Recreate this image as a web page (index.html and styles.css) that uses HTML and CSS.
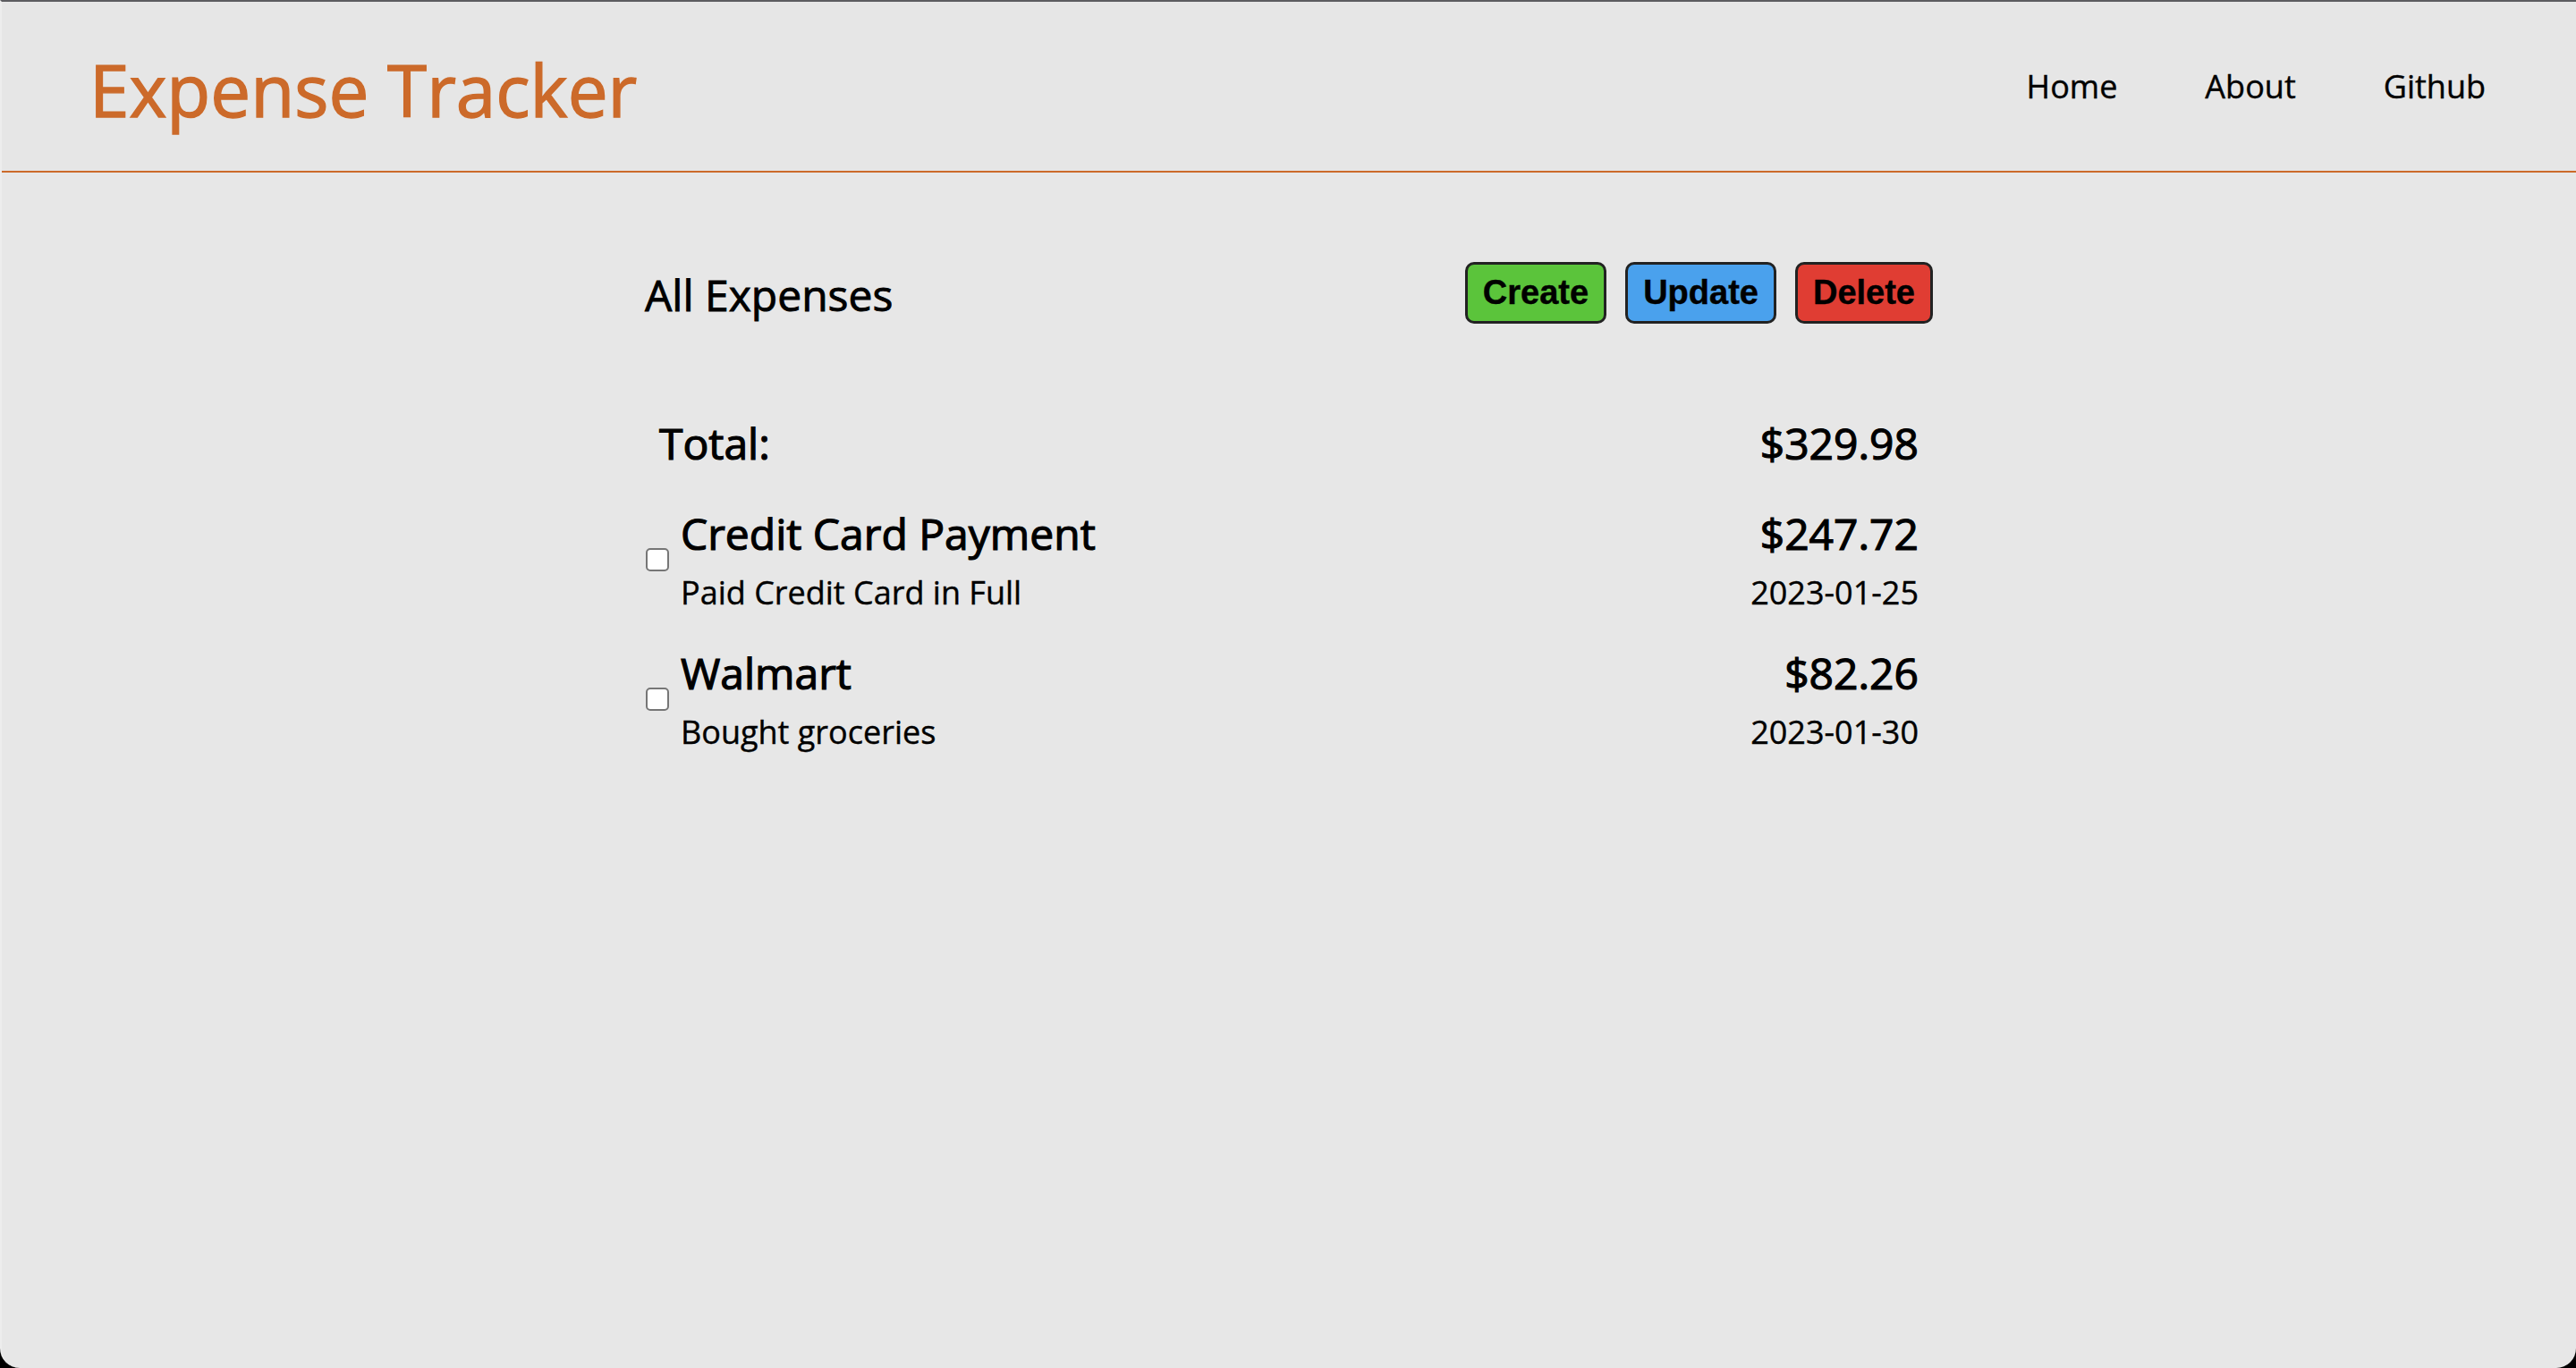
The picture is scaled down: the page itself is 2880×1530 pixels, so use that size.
FILE: index.html
```html
<!DOCTYPE html>
<html lang="en">
<head>
<meta charset="utf-8">
<title>Expense Tracker</title>
<link rel="stylesheet" href="styles.css">
</head>
<body>
<div class="window">
  <header class="site-header">
    <h1 class="brand">Expense Tracker</h1>
    <nav class="nav">
      <a href="#" class="nav-link">Home</a>
      <a href="#" class="nav-link">About</a>
      <a href="#" class="nav-link">Github</a>
    </nav>
  </header>
  <main class="content">
    <div class="toolbar">
      <h2 class="page-title">All Expenses</h2>
      <div class="actions">
        <button class="btn btn-create">Create</button>
        <button class="btn btn-update">Update</button>
        <button class="btn btn-delete">Delete</button>
      </div>
    </div>
    <div class="total-row">
      <span class="total-label">Total:</span>
      <span class="total-amount">$329.98</span>
    </div>
    <ul class="expense-list">
      <li class="expense">
        <input type="checkbox" class="check">
        <div class="expense-main">
          <div class="expense-name">Credit Card Payment</div>
          <div class="expense-desc">Paid Credit Card in Full</div>
        </div>
        <div class="expense-side">
          <div class="expense-amount">$247.72</div>
          <div class="expense-date">2023-01-25</div>
        </div>
      </li>
      <li class="expense">
        <input type="checkbox" class="check">
        <div class="expense-main">
          <div class="expense-name">Walmart</div>
          <div class="expense-desc">Bought groceries</div>
        </div>
        <div class="expense-side">
          <div class="expense-amount">$82.26</div>
          <div class="expense-date">2023-01-30</div>
        </div>
      </li>
    </ul>
  </main>
</div>
</body>
</html>
```
FILE: styles.css
```css
html, body {
  margin: 0;
  padding: 0;
  height: 100%;
  background: #000;
}
body {
  font-family: "Open Sans", "Noto Sans", sans-serif;
  color: #000;
}
.window {
  box-sizing: border-box;
  height: 1530px;
  background: #e7e7e7;
  border-top: 2px solid #5c5c60;
  border-left: 2px solid #ededed;
  border-radius: 0 0 22px 22px;
  overflow: hidden;
}
.site-header {
  display: flex;
  align-items: center;
  justify-content: space-between;
  height: 189px;
  padding: 0 101px 0 98px;
  border-bottom: 2px solid #cc6a2a;
  background: #e6e6e6;
}
.brand {
  margin: 0;
  font-size: 80px;
  font-weight: 400;
  color: #cc6a2a;
  -webkit-text-stroke: 1.4px #cc6a2a;
  line-height: 1;
  padding-top: 6px;
}
.nav {
  display: flex;
  gap: 98px;
}
.nav-link {
  font-size: 36px;
  font-weight: 400;
  -webkit-text-stroke: 0.4px #000;
  color: #000;
  text-decoration: none;
}
.content {
  width: 1440px;
  margin: 0 auto;
  padding-top: 100px;
}
.toolbar {
  display: flex;
  align-items: center;
  justify-content: space-between;
}
.page-title {
  margin: 0;
  font-size: 48px;
  font-weight: 400;
  -webkit-text-stroke: 0.9px #000;
  padding-top: 4px;
}
.actions {
  display: flex;
  gap: 21px;
}
.btn {
  font-family: "Liberation Sans", Arial, sans-serif;
  font-weight: 700;
  font-size: 38px;
  color: #000;
  -webkit-text-stroke: 0.4px #000;
  border: 3px solid #222;
  border-radius: 10px;
  padding: 9px 17px;
  height: 69px;
  cursor: pointer;
}
.btn-create { background: #5bc43b; }
.btn-update { background: #4aa1ed; }
.btn-delete { background: #e03d33; }
.total-row {
  display: flex;
  justify-content: space-between;
  padding: 0 16px;
  margin-top: 101px;
  font-size: 48px;
  font-weight: 400;
  -webkit-text-stroke: 1.2px #000;
}
.expense-list {
  list-style: none;
  margin: 36px 0 0;
  padding: 0 16px 0 0;
}
.expense {
  display: flex;
  align-items: center;
  margin-bottom: 33px;
}
.check {
  appearance: none;
  -webkit-appearance: none;
  box-sizing: border-box;
  width: 26px;
  height: 26px;
  margin: 0 13px 0 1px;
  background: #fff;
  border: 2px solid #767676;
  border-radius: 5px;
}
.expense-main {
  flex: 1;
}
.expense-side {
  text-align: right;
}
.expense-name,
.expense-amount {
  font-size: 48px;
  font-weight: 400;
  -webkit-text-stroke: 1.2px #000;
  margin-bottom: 9px;
}
.expense-desc,
.expense-date {
  font-size: 36px;
  font-weight: 400;
  -webkit-text-stroke: 0.4px #000;
}
```
